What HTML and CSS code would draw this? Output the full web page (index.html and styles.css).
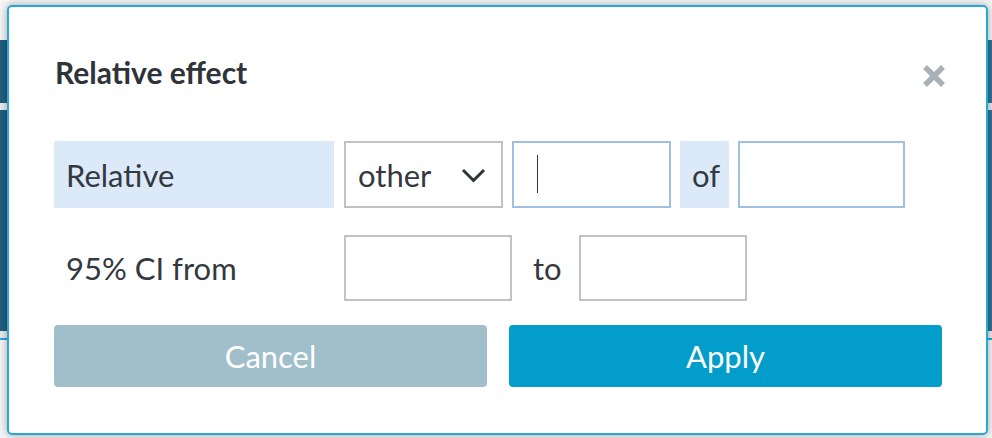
FILE: index.html
```html
<!DOCTYPE html>
<html lang="en">
<head>
    <meta charset="UTF-8">
    <meta name="viewport" content="width=device-width, initial-scale=1.0">
    <title>Relative effect</title>
    <link rel="stylesheet" href="styles.css">
</head>
<body>
    <!-- Page behind the dialog -->
    <div class="page">
        <div class="page-top"></div>
        <div class="page-bar"></div>
        <div class="page-gap"></div>
        <div class="page-panel"></div>
        <div class="page-gap"></div>
        <div class="page-rule"></div>
    </div>

    <!-- Dialog -->
    <div class="modal">
        <div class="modal-header">
            <h2 class="modal-title">Relative effect</h2>
            <button class="modal-close" aria-label="Close">
                <svg width="24" height="24" viewBox="0 0 24 24">
                    <path d="M3 3 L21 21 M21 3 L3 21" stroke="#a9b0b6" stroke-width="5.5" stroke-linecap="butt"/>
                </svg>
            </button>
        </div>

        <div class="form-row">
            <div class="field-label label-shaded label-wide">Relative</div>
            <div class="select-box">
                <span>other</span>
                <svg width="25" height="15" viewBox="0 0 25 15">
                    <polyline points="2,2 12.5,12.5 23,2" fill="none" stroke="#2e3439" stroke-width="3"/>
                </svg>
            </div>
            <div class="input-wrap has-caret">
                <input class="text-input input-blue input-narrow" type="text">
            </div>
            <div class="field-label label-shaded label-of">of</div>
            <input class="text-input input-blue input-of" type="text">
        </div>

        <div class="form-row row-second">
            <div class="field-label label-wide">95% CI from</div>
            <input class="text-input input-wide" type="text">
            <div class="field-label label-to">to</div>
            <input class="text-input input-wide" type="text">
        </div>

        <div class="modal-actions">
            <button class="btn btn-cancel">Cancel</button>
            <button class="btn btn-apply">Apply</button>
        </div>
    </div>
</body>
</html>
```

FILE: styles.css
```css
* {
    margin: 0;
    padding: 0;
    box-sizing: border-box;
    font-family: 'Lato', 'Open Sans', sans-serif;
}

body {
    background-color: #f6f6f6;
    width: 992px;
    height: 438px;
    overflow: hidden;
    position: relative;
}

/* Page behind */
.page-top {
    height: 40px;
}

.page-bar {
    height: 63px;
    background: linear-gradient(90deg, #215f7f, #2f7593);
}

.page-gap {
    height: 7px;
    background-color: #e9ebec;
}

.page-panel {
    height: 221px;
    background: linear-gradient(90deg, #215f7f, #2f7593);
}

.page-rule {
    height: 2px;
    background-color: #2ba6dc;
}

/* Dialog */
.modal {
    position: absolute;
    top: 5px;
    left: 7px;
    width: 981px;
    background-color: #fff;
    border: 2px solid #2ba6dc;
    border-radius: 5px;
    box-shadow: 0 0 9px rgba(0, 0, 0, 0.35);
    padding: 45px 44px 46px 45px;
    color: #33393e;
}

.modal-header {
    display: flex;
    justify-content: space-between;
    align-items: flex-start;
    height: 40px;
    margin-bottom: 49px;
}

.modal-title {
    font-size: 30px;
    font-weight: bold;
    line-height: 40px;
    color: #2e3439;
    margin-left: 1px;
}

.modal-close {
    background: none;
    border: none;
    width: 24px;
    height: 24px;
    margin-top: 12px;
    margin-right: -4px;
    cursor: pointer;
}

.modal-close svg {
    display: block;
}

.form-row {
    display: flex;
    align-items: center;
    gap: 9px;
    height: 67px;
}

.row-second {
    height: 66px;
    margin-top: 27px;
}

.field-label {
    height: 100%;
    display: flex;
    align-items: center;
    font-size: 31px;
}

.label-shaded {
    background-color: #dce9f9;
}

.label-wide {
    width: 280px;
    margin-right: 1px;
    padding-left: 12px;
}

.label-of {
    width: 49px;
    padding-left: 12px;
}

.label-to {
    width: 49px;
    padding-left: 12px;
}

.select-box {
    width: 159px;
    height: 100%;
    border: 2px solid #c2c2c2;
    display: flex;
    align-items: center;
    justify-content: space-between;
    padding: 0 15px 0 12px;
    font-size: 31px;
}

.select-box svg {
    display: block;
    margin-top: 2px;
}

.text-input {
    height: 100%;
    border: 2px solid #c2c2c2;
    background-color: #fff;
    outline: none;
    font-size: 31px;
    padding: 0 12px;
}

.input-blue {
    border-color: #9fc0e3;
}

.input-wrap {
    position: relative;
    height: 100%;
}

.input-narrow {
    width: 159px;
}

.has-caret::after {
    content: '';
    position: absolute;
    left: 25px;
    top: 14px;
    width: 1px;
    height: 38px;
    background-color: #2e3439;
}

.input-of {
    width: 167px;
}

.input-wide {
    width: 168px;
}

.modal-actions {
    display: flex;
    gap: 22px;
    margin-top: 24px;
}

.btn {
    flex: 1;
    height: 62px;
    border: none;
    border-radius: 4px;
    color: #fff;
    font-size: 31px;
    cursor: pointer;
}

.btn-cancel {
    background-color: #a0bfcb;
}

.btn-apply {
    background-color: #029dca;
}
```
